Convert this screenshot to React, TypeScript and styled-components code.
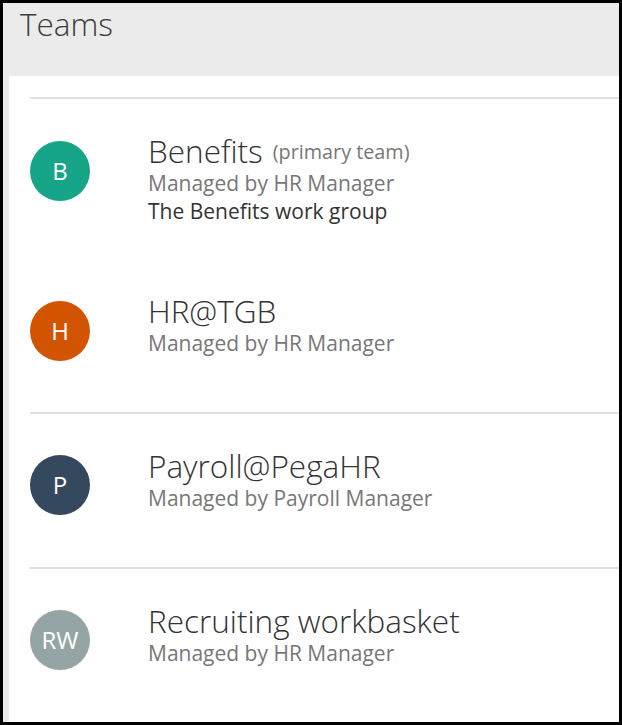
import React from "react";
import styled, { createGlobalStyle } from "styled-components";

const GlobalStyle = createGlobalStyle`
  html, body {
    margin: 0;
    padding: 0;
    background: #000;
  }
  body {
    font-family: "Open Sans", "Liberation Sans", sans-serif;
  }
`;

const teams = [
  { initials: "B", color: "#17a589", name: "Benefits", primary: true, manager: "HR Manager", about: "The Benefits work group", height: 160, top: 42, lift: 6, gap: 3, line: false },
  { initials: "H", color: "#d35400", name: "HR@TGB", manager: "HR Manager", height: 155, top: 42, lift: 6, gap: 4, line: true },
  { initials: "P", color: "#34495e", name: "Payroll@PegaHR", manager: "Payroll Manager", height: 155, top: 41, lift: 5, gap: 4, line: true },
  { initials: "RW", color: "#95a5a6", name: "Recruiting workbasket", manager: "HR Manager", height: 153, top: 41, lift: 5, gap: 4, line: false },
];

const App = () => {
  return (
    <Frame>
      <GlobalStyle />
      <Panel>
        <Title>Teams</Title>
        <Content>
          <TopRule />
          {teams.map((team) => (
            <Row key={team.name} $height={team.height} $top={team.top} $line={team.line}>
              <Avatar $color={team.color}>{team.initials}</Avatar>
              <Info $lift={team.lift}>
                <Name>
                  {team.name}
                  {team.primary && <Primary>(primary team)</Primary>}
                </Name>
                <Manager $gap={team.gap}>Managed by {team.manager}</Manager>
                {team.about && <About>{team.about}</About>}
              </Info>
            </Row>
          ))}
        </Content>
      </Panel>
    </Frame>
  );
};

const Frame = styled.div`
  width: 622px;
  height: 725px;
  box-sizing: border-box;
  padding: 3px;
  overflow: hidden;
`;

const Panel = styled.div`
  height: 719px;
  background: #ebebeb;
  display: flex;
  flex-direction: column;
`;

const Title = styled.h2`
  margin: 0;
  height: 74px;
  padding-left: 17px;
  font-size: 31.5px;
  line-height: 41px;
  font-weight: 300;
  color: #3c3c3c;
`;

const Content = styled.div`
  flex: 1;
  margin-left: 6px;
  padding-left: 21px;
  padding-top: 21px;
  background: #fff;
`;

const TopRule = styled.div`
  height: 2px;
  background: #e0e0e0;
`;

const Row = styled.div<{ $height: number; $top: number; $line: boolean }>`
  box-sizing: border-box;
  height: ${(p) => p.$height}px;
  display: flex;
  align-items: flex-start;
  padding-top: ${(p) => p.$top}px;
  border-bottom: ${(p) => (p.$line ? "2px solid #e0e0e0" : "none")};
`;

const Avatar = styled.div<{ $color: string }>`
  flex: none;
  width: 60px;
  height: 60px;
  border-radius: 50%;
  background: ${(p) => p.$color};
  color: #fff;
  font-size: 24px;
  line-height: 60px;
  text-align: center;
`;

const Info = styled.div<{ $lift: number }>`
  margin-left: 58px;
  margin-top: -${(p) => p.$lift}px;
`;

const Name = styled.div`
  font-size: 31.5px;
  line-height: 32px;
  font-weight: 300;
  color: #333;
`;

const Primary = styled.span`
  margin-left: 10px;
  font-size: 19.8px;
  font-weight: 400;
  color: #777;
  vertical-align: 4px;
`;

const Manager = styled.div<{ $gap: number }>`
  font-size: 21px;
  line-height: 24px;
  margin-top: ${(p) => p.$gap}px;
  color: #777;
`;

const About = styled.div`
  font-size: 21px;
  line-height: 28px;
  margin-top: 2px;
  color: #333;
`;

export default App;
